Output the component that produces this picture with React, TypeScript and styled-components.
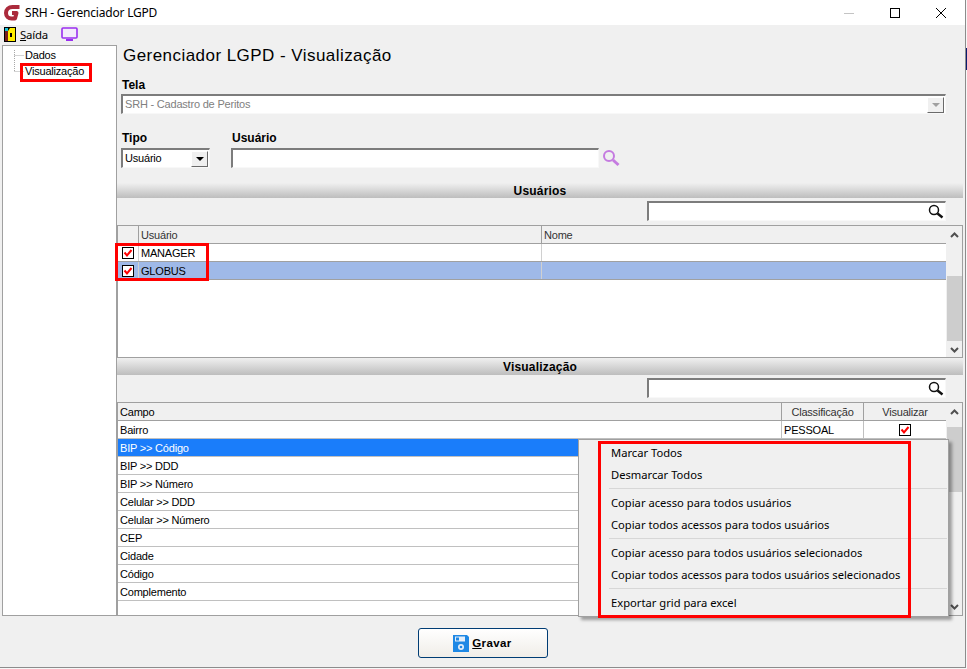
import styled, { createGlobalStyle } from "styled-components";
import type { ReactNode } from "react";

const GlobalStyle = createGlobalStyle`
  html, body {
    margin: 0;
    padding: 0;
    background: #f7f7f7;
  }
  * {
    box-sizing: border-box;
  }
`;

const uiFont = `"Liberation Sans", Arial, sans-serif`;
const systemFont = `"Noto Sans", "Open Sans", sans-serif`;

const Window = styled.div`
  position: relative;
  width: 966px;
  height: 668px;
  display: flex;
  flex-direction: column;
  background: #f0f0f0;
  border-right: 1px solid #8c8c8c;
  border-bottom: 1px solid #8c8c8c;
  font-family: ${uiFont};
  font-size: 11px;
  letter-spacing: -0.2px;
  color: #000;
`;

const BehindWindow = styled.div`
  position: absolute;
  left: 966px;
  top: 48px;
  width: 1px;
  height: 22px;
  background: #0a1a6e;
`;

const TitleBar = styled.div`
  height: 25px;
  flex-shrink: 0;
  display: flex;
  align-items: center;
  background: #fff;
  padding-left: 4px;
`;

const TitleText = styled.span`
  margin-left: 4px;
  font-family: ${systemFont};
  font-size: 12px;
  letter-spacing: -0.2px;
`;

const WindowButtons = styled.div`
  margin-left: auto;
  display: flex;
  margin-right: 1px;
`;

const WindowButton = styled.div`
  width: 46px;
  height: 25px;
  display: flex;
  align-items: center;
  justify-content: center;
`;

const MenuBar = styled.div`
  height: 20px;
  flex-shrink: 0;
  display: flex;
  align-items: center;
  padding: 0 0 2px 4px;
`;

const MenuLabel = styled.span`
  margin-left: 4px;
  margin-right: 13px;
  font-family: ${systemFont};
  font-size: 11.4px;
  letter-spacing: -0.2px;
  u {
    text-underline-offset: 1px;
  }
`;

const Body = styled.div`
  height: 571px;
  flex-shrink: 0;
  display: flex;
  padding-left: 2px;
`;

const Tree = styled.div`
  position: relative;
  width: 115px;
  flex-shrink: 0;
  background: #fff;
  border: 1px solid #a0a0a0;
  padding: 1px 0 0 22px;
`;

const TreeLines = styled.svg`
  position: absolute;
  left: 11px;
  top: 4px;
`;

const TreeItem = styled.div`
  height: 16px;
  line-height: 16px;
`;

const RedFrame = styled.div<{ $left: number; $top: number; $width: number; $height: number }>`
  position: absolute;
  left: ${(p) => p.$left}px;
  top: ${(p) => p.$top}px;
  width: ${(p) => p.$width}px;
  height: ${(p) => p.$height}px;
  border: 3px solid #f00;
  pointer-events: none;
  z-index: 5;
`;

const Main = styled.div`
  flex: 1;
  display: flex;
  flex-direction: column;
  min-width: 0;
`;

const Form = styled.div`
  padding-left: 4px;
  height: 138px;
  flex-shrink: 0;
`;

const PageTitle = styled.h1`
  margin: 0;
  height: 21px;
  line-height: 21px;
  padding-left: 2px;
  font-size: 17px;
  font-weight: 400;
  letter-spacing: 0.45px;
`;

const FieldLabel = styled.div`
  height: 15px;
  line-height: 15px;
  font-weight: 700;
  font-size: 12px;
  letter-spacing: 0;
  padding-left: 1px;
`;

const Sunken = styled.div<{ $width: number }>`
  width: ${(p) => p.$width}px;
  height: 20px;
  display: flex;
  align-items: center;
  background: #fff;
  border-top: 2px solid #7c7c7c;
  border-left: 2px solid #7c7c7c;
  border-right: 1px solid #f8f8f8;
  border-bottom: 1px solid #f8f8f8;
`;

const FieldValue = styled.span<{ $muted?: boolean }>`
  flex: 1;
  padding: 0 0 1px 2px;
  color: ${(p) => (p.$muted ? "#808080" : "#000")};
`;

const ComboArrow = styled.div<{ $disabled?: boolean }>`
  width: 17px;
  height: 16px;
  margin-right: 1px;
  display: flex;
  align-items: center;
  justify-content: center;
  background: #f0f0f0;
  border-right: 1px solid #6a6a6a;
  border-bottom: 1px solid #6a6a6a;
  border-top: 1px solid #fff;
  border-left: 1px solid #fff;

  &::after {
    content: "";
    border-left: 4px solid transparent;
    border-right: 4px solid transparent;
    border-top: 4px solid ${(p) => (p.$disabled ? "#a0a0a0" : "#000")};
  }
`;

const TelaField = styled.div`
  margin-top: 12px;
`;

const TelaCombo = styled(Sunken)`
  margin-top: 1px;
`;

const FilterRow = styled.div`
  display: flex;
  margin-top: 17px;
`;

const TipoField = styled.div`
  width: 110px;
`;

const UserField = styled.div`
  display: flex;
  flex-direction: column;
`;

const UserInputRow = styled.div`
  display: flex;
  align-items: center;
  gap: 3px;
`;

const FieldGap = styled.div`
  height: 2px;
`;

const SectionHeader = styled.div<{ $height: number }>`
  height: ${(p) => p.$height}px;
  flex-shrink: 0;
  margin-right: 2px;
  display: flex;
  align-items: center;
  justify-content: center;
  font-weight: 700;
  font-size: 12px;
  letter-spacing: 0.2px;
  background: linear-gradient(#f0f0f0, #bdbdbd);
`;

const SearchBar = styled.div<{ $height: number }>`
  height: ${(p) => p.$height}px;
  flex-shrink: 0;
  padding: 3px 19px 0 0;
  display: flex;
  justify-content: flex-end;
`;

const SearchBox = styled(Sunken)`
  justify-content: flex-end;
  padding-right: 1px;
`;

const Grid = styled.div<{ $height: number }>`
  height: ${(p) => p.$height}px;
  flex-shrink: 0;
  margin-right: 2px;
  display: flex;
  background: #fff;
  border: 1px solid #a0a0a0;
`;

const GridTable = styled.div`
  width: 828px;
  flex-shrink: 0;
  display: flex;
  flex-direction: column;
`;

const Row = styled.div<{ $header?: boolean; $selected?: string; $line: string; $white?: boolean }>`
  height: 18px;
  flex-shrink: 0;
  display: flex;
  background: ${(p) => p.$selected ?? (p.$header ? "#f0f0f0" : "#fff")};
  color: ${(p) => (p.$white ? "#fff" : "#000")};
  border-bottom: 1px solid ${(p) => p.$line};
`;

const Cell = styled.div<{ $width?: number; $center?: boolean; $line?: string; $muted?: boolean }>`
  ${(p) => (p.$width ? `width: ${p.$width}px; flex-shrink: 0;` : "flex: 1;")}
  display: flex;
  align-items: center;
  justify-content: ${(p) => (p.$center ? "center" : "flex-start")};
  padding-left: ${(p) => (p.$center ? 0 : 2)}px;
  color: ${(p) => (p.$muted ? "#333" : "inherit")};
  ${(p) => (p.$line ? `border-right: 1px solid ${p.$line};` : "")}
  white-space: nowrap;
`;

const ScrollBar = styled.div`
  flex: 1;
  display: flex;
  flex-direction: column;
  align-items: stretch;
  padding-left: 1px;
  background: #f0f0f0;
`;

const ScrollButton = styled.div`
  height: 17px;
  flex-shrink: 0;
  display: flex;
  align-items: center;
  justify-content: center;
`;

const ScrollTrack = styled.div<{ $before: number; $thumb: number }>`
  flex: 1;
  padding-top: ${(p) => p.$before}px;

  &::before {
    content: "";
    display: block;
    height: ${(p) => p.$thumb}px;
    background: #cdcdcd;
  }
`;

const Footer = styled.div`
  flex: 1;
  display: flex;
  justify-content: center;
  padding-top: 12px;
`;

const SaveButton = styled.button`
  width: 130px;
  height: 30px;
  display: flex;
  align-items: center;
  justify-content: center;
  gap: 3px;
  padding: 0;
  border: 1px solid #003c74;
  border-radius: 3px;
  background: linear-gradient(#ffffff, #f0ede8);
  font-family: ${uiFont};
  font-size: 11.5px;
  font-weight: 700;
  letter-spacing: 0.4px;
  color: #000;
`;

const ContextMenu = styled.div`
  position: absolute;
  left: 578px;
  top: 439px;
  width: 371px;
  height: 178px;
  padding-top: 2px;
  background: #f0f0f0;
  border: 1px solid #a0a0a0;
  box-shadow: 3px 3px 3px rgba(0, 0, 0, 0.35);
  z-index: 4;
  font-family: ${systemFont};
  letter-spacing: 0;
`;

const MenuItem = styled.div`
  height: 22px;
  line-height: 22px;
  padding-left: 32px;
  font-size: 11.2px;
  color: #000;
  white-space: nowrap;
`;

const MenuSeparator = styled.div`
  height: 1px;
  margin: 2px 1px 3px 30px;
  background: #d7d7d7;
`;

const Check = () => (
  <svg width="14" height="14" viewBox="0 0 14 14">
    <rect x="1.5" y="1.5" width="11" height="11" fill="#fff" stroke="#000" />
    <path d="M3.5 6.5 L6 9.5 L10.5 4" fill="none" stroke="#f00" strokeWidth="2" />
  </svg>
);

const Magnifier = () => (
  <svg width="16" height="15" viewBox="0 0 16 15">
    <circle cx="6" cy="6" r="4.5" fill="none" stroke="#111" strokeWidth="1.5" />
    <path d="M9.5 9.5 L14.5 13.5" stroke="#111" strokeWidth="2.4" />
  </svg>
);

const PurpleMagnifier = () => (
  <svg width="18" height="18" viewBox="0 0 18 18">
    <circle cx="7" cy="7" r="5" fill="none" stroke="#c57be0" strokeWidth="2" />
    <path d="M11 11 L16.5 16" stroke="#c57be0" strokeWidth="3" />
  </svg>
);

const ArrowUp = () => (
  <svg width="9" height="6" viewBox="0 0 9 6">
    <path d="M1 5 L4.5 1.5 L8 5" fill="none" stroke="#505050" strokeWidth="2" />
  </svg>
);

const ArrowDown = () => (
  <svg width="9" height="6" viewBox="0 0 9 6">
    <path d="M1 1 L4.5 4.5 L8 1" fill="none" stroke="#505050" strokeWidth="2" />
  </svg>
);

const Logo = () => (
  <svg width="17" height="17" viewBox="0 0 17 17">
    <path
      d="M15.5 3 H8.5 C4.5 3 2 5.5 2 9 C2 12.5 4.5 14.5 7.5 14.5 H11 L12.5 9 H8"
      fill="none"
      stroke="#ab2a3c"
      strokeWidth="4"
      strokeLinejoin="round"
    />
  </svg>
);

const DoorIcon = () => (
  <svg width="12" height="15" viewBox="0 0 12 15">
    <rect width="12" height="15" fill="#000" />
    <rect x="1" y="1" width="3" height="13" fill="#7a1f1f" />
    <rect x="1" y="1" width="3" height="3" fill="#19c0d8" />
    <path d="M4 4 L6 1 H11 V14 H4 Z" fill="#ffee00" />
    <rect x="6" y="6" width="2" height="4" fill="#000" />
  </svg>
);

const MonitorIcon = () => (
  <svg width="17" height="14" viewBox="0 0 17 14">
    <rect x="1" y="1" width="15" height="10" rx="1" fill="#f4ecfb" stroke="#9a2ef0" strokeWidth="1.6" />
    <path d="M5 13 H12" stroke="#9a2ef0" strokeWidth="2" />
  </svg>
);

const FloppyIcon = () => (
  <svg width="16" height="17" viewBox="0 0 16 17">
    <path d="M0 0 H14 L16 2 V17 H0 Z" fill="#1e88e5" />
    <rect x="2" y="1.5" width="10" height="5" fill="#e3eefa" />
    <rect x="3" y="2.5" width="3" height="3" fill="#1e88e5" />
    <circle cx="8" cy="12" r="3" fill="#e3eefa" />
    <circle cx="8" cy="12" r="1.3" fill="#1e88e5" />
  </svg>
);

const GridScroll = ({ before, thumb }: { before: number; thumb: number }) => (
  <ScrollBar>
    <ScrollButton>
      <ArrowUp />
    </ScrollButton>
    <ScrollTrack $before={before} $thumb={thumb} />
    <ScrollButton>
      <ArrowDown />
    </ScrollButton>
  </ScrollBar>
);

const UserRow = ({ name, selected }: { name: string; selected?: boolean }) => (
  <Row $line="#a0a0a0" $selected={selected ? "#9fb9e8" : undefined}>
    <Cell $width={21} $center $line="#d0d0d0">
      <Check />
    </Cell>
    <Cell $width={403} $line="#d0d0d0">
      {name}
    </Cell>
    <Cell />
  </Row>
);

const campos = [
  "BIP >> DDD",
  "BIP >> Número",
  "Celular >> DDD",
  "Celular >> Número",
  "CEP",
  "Cidade",
  "Código",
  "Complemento",
];

const Item = ({ children }: { children: ReactNode }) => <MenuItem>{children}</MenuItem>;

export default function App() {
  return (
    <>
      <GlobalStyle />
      <Window>
        <BehindWindow />
        <TitleBar>
          <Logo />
          <TitleText>SRH - Gerenciador LGPD</TitleText>
          <WindowButtons>
            <WindowButton>
              <svg width="10" height="10" viewBox="0 0 10 10">
                <path d="M0 5.5 H10" stroke="#c4c4c4" />
              </svg>
            </WindowButton>
            <WindowButton>
              <svg width="10" height="10" viewBox="0 0 10 10">
                <rect x="0.5" y="0.5" width="9" height="9" fill="none" stroke="#000" />
              </svg>
            </WindowButton>
            <WindowButton>
              <svg width="10" height="10" viewBox="0 0 10 10">
                <path d="M0 0 L10 10 M10 0 L0 10" stroke="#000" />
              </svg>
            </WindowButton>
          </WindowButtons>
        </TitleBar>

        <MenuBar>
          <DoorIcon />
          <MenuLabel>
            <u>S</u>aída
          </MenuLabel>
          <MonitorIcon />
        </MenuBar>

        <Body>
          <Tree>
            <TreeLines width="12" height="24" viewBox="0 0 12 24">
              <path d="M0.5 0 V22 M0.5 5.5 H10 M0.5 21.5 H10" stroke="#a8a8a8" strokeDasharray="1 1" fill="none" />
            </TreeLines>
            <TreeItem>Dados</TreeItem>
            <TreeItem>Visualização</TreeItem>
          </Tree>

          <Main>
            <Form>
              <PageTitle>Gerenciador LGPD - Visualização</PageTitle>
              <TelaField>
                <FieldLabel>Tela</FieldLabel>
                <TelaCombo $width={825}>
                  <FieldValue $muted>SRH - Cadastro de Peritos</FieldValue>
                  <ComboArrow $disabled />
                </TelaCombo>
              </TelaField>
              <FilterRow>
                <TipoField>
                  <FieldLabel>Tipo</FieldLabel>
                  <FieldGap />
                  <Sunken $width={89}>
                    <FieldValue>Usuário</FieldValue>
                    <ComboArrow />
                  </Sunken>
                </TipoField>
                <UserField>
                  <FieldLabel>Usuário</FieldLabel>
                  <FieldGap />
                  <UserInputRow>
                    <Sunken $width={368} />
                    <PurpleMagnifier />
                  </UserInputRow>
                </UserField>
              </FilterRow>
            </Form>

            <SectionHeader $height={15}>Usuários</SectionHeader>
            <SearchBar $height={27}>
              <SearchBox $width={299}>
                <Magnifier />
              </SearchBox>
            </SearchBar>
            <Grid $height={133}>
              <GridTable>
                <Row $header $line="#a0a0a0">
                  <Cell $width={21} $line="#a0a0a0" />
                  <Cell $width={403} $line="#a0a0a0" $muted>
                    Usuário
                  </Cell>
                  <Cell $muted>Nome</Cell>
                </Row>
                <UserRow name="MANAGER" />
                <UserRow name="GLOBUS" selected />
              </GridTable>
              <GridScroll before={33} thumb={65} />
            </Grid>

            <SectionHeader $height={17}>Visualização</SectionHeader>
            <SearchBar $height={27}>
              <SearchBox $width={299}>
                <Magnifier />
              </SearchBox>
            </SearchBar>
            <Grid $height={214}>
              <GridTable>
                <Row $header $line="#a0a0a0">
                  <Cell $line="#a0a0a0">Campo</Cell>
                  <Cell $width={82} $center $line="#a0a0a0" $muted>
                    Classificação
                  </Cell>
                  <Cell $width={82} $center $muted>
                    Visualizar
                  </Cell>
                </Row>
                <Row $line="#c0c0c0">
                  <Cell $line="#c0c0c0">Bairro</Cell>
                  <Cell $width={82} $line="#c0c0c0">
                    PESSOAL
                  </Cell>
                  <Cell $width={82} $center>
                    <Check />
                  </Cell>
                </Row>
                <Row $line="#c0c0c0" $selected="#1a7dfa" $white>
                  <Cell>BIP &gt;&gt; Código</Cell>
                </Row>
                {campos.map((campo) => (
                  <Row key={campo} $line="#c0c0c0">
                    <Cell>{campo}</Cell>
                  </Row>
                ))}
              </GridTable>
              <GridScroll before={7} thumb={65} />
            </Grid>
          </Main>
        </Body>

        <Footer>
          <SaveButton>
            <FloppyIcon />
            <span>
              <u>G</u>ravar
            </span>
          </SaveButton>
        </Footer>

        <ContextMenu>
          <Item>Marcar Todos</Item>
          <Item>Desmarcar Todos</Item>
          <MenuSeparator />
          <Item>Copiar acesso para todos usuários</Item>
          <Item>Copiar todos acessos para todos usuários</Item>
          <MenuSeparator />
          <Item>Copiar acesso para todos usuários selecionados</Item>
          <Item>Copiar todos acessos para todos usuários selecionados</Item>
          <MenuSeparator />
          <Item>Exportar grid para excel</Item>
        </ContextMenu>

        <RedFrame $left={20} $top={63} $width={72} $height={19} />
        <RedFrame $left={115} $top={243} $width={94} $height={38} />
        <RedFrame $left={598} $top={441} $width={313} $height={177} />
      </Window>
    </>
  );
}
